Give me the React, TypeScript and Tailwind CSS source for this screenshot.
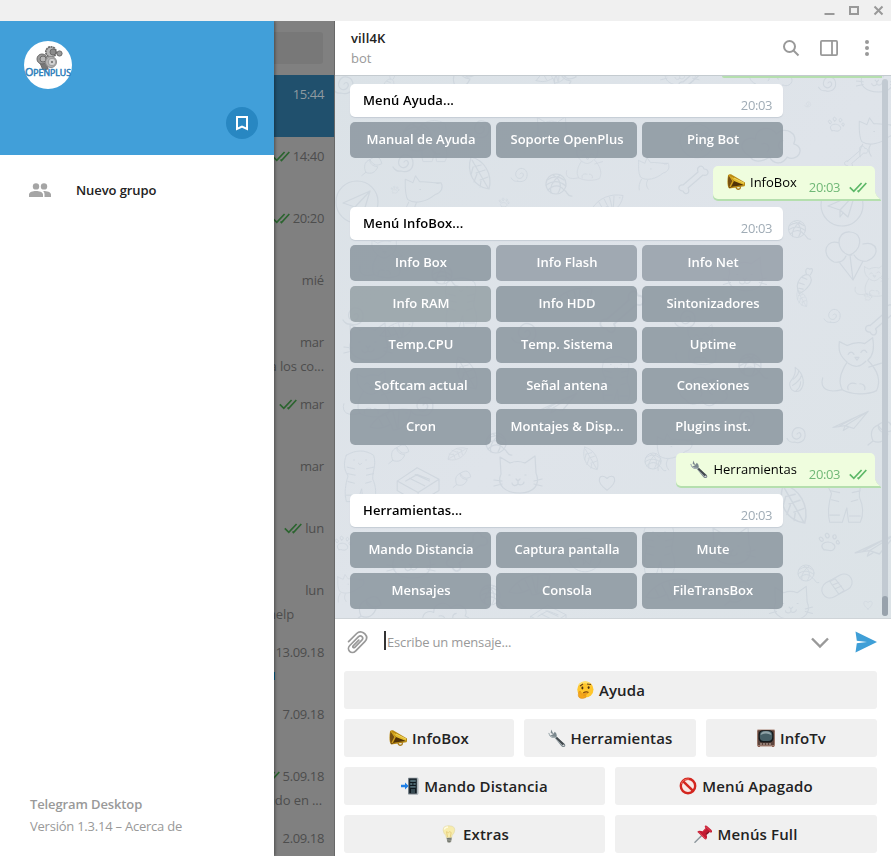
import React from "react";

const PatternMark = ({ kind }: { kind: string }) => {
  switch (kind) {
    case "spiral":
      return <path d="M0 0c3-4 6 1 3 4-4 4-10 0-8-6C-2-10 9-8 9 1 9 8 3 11-3 9M-3 9c-4 1-7-2-8-4" />;
    case "plane":
      return (
        <>
          <circle r="21" />
          <path d="M-14 1 13-11 6 12-2 5-14 1ZM-2 5 13-11M-2 5v7l3-4" />
        </>
      );
    case "dart":
      return <path d="M-18 9 19-8 4 10-5 7-18 9ZM-5 7 19-8M-12 8l22-12M-5 7l-2 5 5-3" />;
    case "fox":
      return <path d="M-22-15c0 8-1 17 3 24 9 6 22 2 32-6 8-2 10-9 7-14-9 1-17-2-25-1l-5-7-3 8-9-4ZM-5-3h1M13-11c3 2 5 1 7 0M-18 12c-3 5-4 10-3 15M-9 13c-3 5-2 9 1 13" />;
    case "leaf":
      return <path d="M-9-17C4-14 13 0 9 15-6 13-14-1-9-17ZM-8-14 8 14M-7-7l8-2M-4-1l9-3M0 6l8-3M-7-7l-2 8M-3 0l-3 8M1 7l-1 6" />;
    case "yarn":
      return (
        <>
          <circle r="10" />
          <path d="M-9-4c7-5 12-4 17 0M-10 1C-3-4 4-3 10 2M-8 6C-2 0 4 1 8 6M-3-9c8 4 9 12 5 18M4-9C-2-4-7 3-5 9M8 6c4 2 3 7 8 6" />
        </>
      );
    case "bone":
      return <path d="m-9 5 15-13c-2-6 5-8 6-3 6 0 5 8-1 6L-4 8c3 5-3 8-5 3-6 0-5-7 0-6Z" />;
    case "balloon":
      return <path d="M0-20c-15-1-14 20-1 23 12-3 16-22 1-23ZM-11-9c-12-5-20 11-5 19 6 1 10-1 12-6M13-8c14-4 19 11 4 17-6 1-10-1-13-6M0 3l3 25M-11 10 3 28M13 9 3 28M-2 3h4" />;
    case "cat":
      return <path d="M-17-23-7-17c5-2 10-2 15 0l10-7 1 17c5 12-3 20-16 20-15 0-24-8-19-19l-1-17ZM-8-5h1M8-5h1M-1-1l2 2 2-2M1 1v3c-3 3-6 1-6-1M1 4c3 2 6 0 6-2M-23 0l8 1M-23 6l8-2M17 1l8-2M17 4l8 2" />;
    case "kitty":
      return <path d="M-17-31-9-27C-3-30 3-31 9-29l8-6c2 11 0 19-5 23 9 9 14 20 9 31-10 5-26 4-35-1-5-9-1-19 5-28-8-7-9-12-8-21ZM-8-18c2-3 4-3 6 0M5-20c2-3 4-3 6 0M-1-15h4l-2 3-2-3ZM-8-9C-1-4 4-5 10-11M-14 18c-15 4-23-1-20-12M-8 18c-2-5 3-8 8-6M9 18c1-4-2-6-5-6M13-5l13-4" />;
    case "tiger":
      return <path d="M-17-31c12-7 23-7 34 0 4 13-2 20-1 30 4 9 5 19 1 28H4L2 11-3 27h-14c-3-11-1-22 2-32-5-8-6-17-2-26ZM-16-16l9 2M-16-8l10 2M17-16 8-14M17-8 8-6M-15 2l8 2M14 2 7 4M-8-25h1M7-25h1M-2-21l2 2 2-2M-17 19H-6M5 20h12" />;
    case "box":
      return <path d="m-24-2 21-14L20-4-2 10-24-2Zm0 0v10L-2 21 20 8V-4M-2 10v11M-15-2-3-9l13 5M-11-5 5 3M-5-9l15 7" />;
    case "heart":
      return <path d="M0 8C-15-3-7-12 0-5 7-12 15-3 0 8Z" />;
    case "paw":
      return <path d="M-5 7c-5-5 0-8 4-8s10 4 5 8c-3 2-6-1-9 0ZM-8-2c-4-3 0-6 2-2 1 2-1 3-2 2ZM-2-5c-4-3 0-7 2-3 1 2-1 3-2 3ZM5-4c-3-3 1-6 2-3 1 2-1 3-2 3ZM9 1c-4-1 0-6 1-2 1 1 0 2-1 2Z" />;
    case "bandage":
      return (
        <>
          <rect x="-18" y="-9" width="36" height="18" rx="9" transform="rotate(-29)" />
          <path d="m-8-5 6-3L8 5 2 9-8-5ZM-5-1l7-3M-2 3l7-3" />
        </>
      );
    case "cloud":
      return <path d="M-22 10c-15-8-3-20 5-15 0-12 15-13 19-5 8-8 21 0 16 9 12 4 3 17-6 12-5 8-13 6-16 0-8 5-15 5-18-1ZM-11-1c6-2 8 4 5 7M8-4c-5 1-5 7-1 8" />;
    case "carrot":
      return <path d="M-6 14C-14 1 0-11 5-6 11 0 2 10-6 14ZM2-7c-3-6 1-9 3-6 3-2 5 0 1 6M-7 2l6 2M-3-4l5 2M-7 8l5 1" />;
    case "flame":
      return <path d="M-7 9c-5-10 7-8 5-23C9-6 9 6 3 12-1 14-6 12-7 9ZM-4-1c4-3 6-6 6-10M-5 6C2 2 4-2 5-5M-1 12c4-3 5-6 5-10" />;
    case "fish":
      return <path d="M-21 7C-12-7 4-13 20-10c-1 9-7 20-18 20L0 4c-9 5-13 5-21 3ZM-12-1l4 7M-5-5l4 8M2-8l4 16M8-9 7 8M15-7h1" />;
    default:
      return <path d="M-9 8c-3-7-2-13 5-16 0 5 3 8 10 9-3 7-8 10-15 7Zm5-16c8-6 13-4 15 5-6 3-10 3-15-5ZM-9 8-14 12" />;
  }
};

const marks: [string, number, number, number?, number?][] = [
  ["spiral", 344, 84], ["sprig", 464, 78], ["fish", 553, 75, .8], ["sprig", 565, 80], ["carrot", 389, 84, .7], ["bone", 692, 77], ["cat", 679, 75, .8], ["cloud", 773, 76, .8], ["spiral", 828, 83, .85], ["cat", 876, 81, .85],
  ["plane", 357, 202], ["fox", 424, 192, .85], ["leaf", 480, 174], ["spiral", 520, 174, .8], ["yarn", 556, 184], ["kitty", 587, 167, .6], ["fish", 608, 203, .75], ["sprig", 373, 166, .8], ["paw", 395, 190, .4], ["paw", 504, 203, .5], ["spiral", 404, 162], ["tiger", 434, 144, .65],
  ["fox", 654, 171, .7], ["bone", 692, 180], ["cloud", 774, 145, 1.1], ["paw", 836, 125, .8], ["fox", 878, 134, .85], ["bone", 855, 157, .8], ["spiral", 808, 104, .3], ["plane", 842, 205], ["yarn", 797, 229, .85], ["balloon", 850, 252],
  ["carrot", 805, 281, .9], ["kitty", 874, 284, .55], ["leaf", 802, 299, .5], ["flame", 797, 380, .9], ["spiral", 833, 315, .8], ["bone", 880, 320, 1.1], ["kitty", 856, 372, .98],
  ["paw", 868, 297, .4], ["dart", 850, 419, .95], ["spiral", 797, 434, .9], ["sprig", 882, 433], ["tiger", 360, 480, .8], ["box", 420, 483, .95], ["cat", 517, 480], ["sprig", 463, 479, .7], ["sprig", 400, 454, .8], ["leaf", 457, 454, .6, 90], ["leaf", 591, 459, .7], ["heart", 607, 483, .9], ["yarn", 496, 443],
  ["fox", 675, 449, .8], ["yarn", 653, 461, .8], ["tiger", 845, 498, .9], ["leaf", 794, 505, 1.2], ["paw", 829, 543], ["dart", 875, 543, 1.1], ["yarn", 806, 573, .8], ["bandage", 837, 586, .9], ["paw", 343, 544, .8], ["fox", 351, 586, .6], ["cat", 790, 608, .9], ["cloud", 449, 617, .9], ["sprig", 370, 608], ["box", 550, 618, .8], ["heart", 868, 605, .5],
  ["spiral", 480, 128], ["yarn", 417, 137, 1.4], ["cat", 551, 136, .8], ["plane", 697, 141, .8], ["kitty", 384, 262, .7], ["yarn", 442, 274], ["spiral", 354, 315], ["tiger", 461, 307, .8], ["bone", 620, 312, 1.5], ["fish", 572, 299], ["cat", 744, 279, .9], ["spiral", 686, 318], ["cat", 367, 347], ["fish", 397, 330, .8],
  ["kitty", 371, 399, .8], ["spiral", 423, 405, 1.1], ["leaf", 467, 374], ["spiral", 525, 332, 1.2], ["tiger", 616, 382, .7], ["yarn", 750, 365, 1.1], ["dart", 558, 401], ["cloud", 706, 391, .9], ["kitty", 700, 349, .7], ["fish", 391, 420], ["spiral", 745, 418], ["bone", 465, 552, 1.4], ["yarn", 490, 595], ["fish", 530, 585], ["plane", 585, 555, .8], ["tiger", 659, 552, .8], ["cat", 730, 551], ["fish", 667, 590], ["sprig", 739, 593], ["cat", 410, 565],
];

const Wallpaper = () => (
  <svg className="absolute inset-0 h-full w-full" viewBox="335 76 556 542" preserveAspectRatio="none" fill="none">
    <defs>
      <linearGradient id="sky" x1="0" y1="0" x2="1" y2="1">
        <stop stopColor="#dbe2e7" />
        <stop offset=".5" stopColor="#dfe4ea" />
        <stop offset="1" stopColor="#dce3e7" />
      </linearGradient>
    </defs>
    <path fill="url(#sky)" d="M335 76h556v542H335z" />
    <g stroke="#cbd3db" strokeWidth="1.2" strokeLinecap="round" strokeLinejoin="round" opacity=".75">
      {marks.map(([kind, x, y, s = 1, r = 0], i) => (
        <g key={i} transform={`translate(${x} ${y}) rotate(${r}) scale(${s})`}>
          <PatternMark kind={kind} />
        </g>
      ))}
    </g>
  </svg>
);

const Emoji = ({ name, className = "" }: { name: string; className?: string }) => {
  const art: Record<string, React.ReactNode> = {
    horn: (
      <>
        <path d="M1 2.2Q2 1 4 1.3L18 9.4q1 2-.6 3.8L2.2 15.5Q-.5 13 1 2.2Z" fill="#b98912" />
        <path d="M3 3 17 10v2.2L6 13.5 3 3Z" fill="#e3bb2c" />
        <path d="m7 8 10 4-14 2 4-6Z" fill="#513207" />
        <path d="M2 1.8 7 8l-3 7H2Q0 8 2 1.8Z" fill="#765013" />
        <path d="m2 2 4 6-3 6" stroke="#d5a41d" strokeWidth="1.3" fill="none" />
        <path d="M9 13.7q.3 3 3 2.5 2-.6 1-3" stroke="#a87917" strokeWidth="1.3" fill="none" />
        <path d="m7 5 10 5" stroke="#f3dc6b" strokeWidth=".9" />
      </>
    ),
    wrench: (
      <>
        <path d="M3.2.5 2.7 4 5 5.1 6.9 2.8Q9.5 5 8.5 8l8 6.7q1.8 2-.2 3.3-1.6.8-3-1L6.8 9.1Q1.4 9.2.4 3.6l2.1 2.8L5.4 5" fill="#7b888e" />
        <path d="M.9 4q.7 4.4 6 4.2l8.3 8.7" stroke="#b0babd" strokeWidth="1.1" fill="none" />
        <path d="m8.4 8.6 7.5 7.4" stroke="#42494d" strokeWidth="2" />
        <circle cx="15.5" cy="16.3" r=".8" fill="#e4e5e5" />
      </>
    ),
    think: (
      <>
        <circle cx="9.4" cy="8.5" r="8.1" fill="#ffc62c" />
        <path d="M3 4Q8-1 14 3" stroke="#ffe16a" strokeWidth="2" fill="none" />
        <path d="m4 5 3-2M11 3l4 .5" stroke="#694116" strokeWidth="1.1" />
        <ellipse cx="6.4" cy="7" rx="1" ry="1.4" fill="#4c3012" />
        <ellipse cx="12.6" cy="6.6" rx="1" ry="1.4" fill="#4c3012" />
        <path d="M7.2 12q3-1.8 5.3-.5" stroke="#79420e" strokeWidth="1.2" fill="none" />
        <path d="M3.1 10.6q1.5-1.2 2.1 1l-.2 1.3 6-1.1q1.2.3.2 1.2l-3.7 1.1 2.2.2q1.2.5-.2 2.4l-3 .9q-4.7-.4-4.2-4.2l.8-2.8Z" fill="#f5a619" stroke="#d88919" strokeWidth=".5" />
      </>
    ),
    tv: (
      <>
        <rect y=".5" width="18" height="17" rx="1" fill="#a88476" />
        <rect x=".8" y="1.2" width="16.4" height="15" rx="1" fill="#5c443d" />
        <rect x="1.6" y="1.2" width="14.8" height="12.4" rx="4.2" fill="#15191b" />
        <rect x="2.8" y="1.9" width="12.4" height="10.2" rx="4" fill="#465f66" />
        <path d="M3.6 6q5.4-3 10.8 0-.4-3.8-5.4-3.8T3.6 6Z" fill="#a9b9bd" opacity=".75" />
        <path d="M3 15h12" stroke="#c4b4a9" strokeWidth="1.2" strokeDasharray="2 1" />
        <path d="M2 17v1m14-1v1" stroke="#8e6154" strokeWidth="2" />
      </>
    ),
    phone: (
      <>
        <path d="M7.8.7h8.5q1 0 1 1v14.8q0 1-1 1H7.8q-.8 0-.8-1V1.7q0-1 .8-1Z" fill="#77828a" />
        <path d="M8.2 1.6h7.6v14.8H8.2z" fill="#101a20" />
        <path d="M9.2 2.8h5.6v2.2H9.2zM9.2 6h2.2v1.9H9.2zm3.2 0h2.3v1.9h-2.3zm-3.2 3h5.5v1.7H9.2z" fill="#4f6a73" />
        <path d="M10 13h4m-4 2h4" stroke="#5d7a83" />
        <path d="M16.4 1v16" stroke="#c1c9ce" strokeWidth=".8" />
        <path d="M0 7.7h4V5.4L7.6 9 4 12.6v-2.3H0Z" fill="#1f7fe6" />
      </>
    ),
    stop: (
      <>
        <circle cx="9" cy="9" r="7.2" fill="#f8e8e5" stroke="#d3261f" strokeWidth="2.4" />
        <path d="m4.2 4.3 9.6 9.4" stroke="#d3261f" strokeWidth="2.5" />
        <path d="M2.2 7Q3.8 1.8 10 2" stroke="#f27a6b" strokeWidth=".8" fill="none" />
      </>
    ),
    bulb: (
      <>
        <path d="M6.5 13Q6.3 10 4 8.2.8 1 8.7.7 17 .9 14 8q-2.5 2.1-2.4 5Z" fill="#f7ecad" stroke="#dfd6a2" strokeWidth=".6" />
        <path d="m7.5 12-1-5.3 2 1 1.2-1 1.5.8-.9 4.5" stroke="#e3c772" strokeWidth=".8" fill="none" />
        <path d="M6.6 12.7h5.2L11.2 17l-2 1-2-1Z" fill="#a6a69b" />
        <path d="m6.8 13.7 4.7-.5m-4.4 2 4.3-.5m-3.8 2 3-.3" stroke="#626963" strokeWidth=".8" />
        <path d="M4.2 4.5Q5 2.2 8 2" stroke="#fffbe1" strokeWidth="1.5" fill="none" />
      </>
    ),
    pin: (
      <>
        <path d="m7.5 10.7-7 7" stroke="#8b969c" strokeWidth="1.4" />
        <path d="M11.1.7q1-.7 2.5.7l3.6 3.4q1.6 1.7.6 2.5-1.1.5-2.4-.4l-3 2.5q1.4 3-.2 4.8-.7.6-1.6-.2L4 7.6q-1.1-1 .1-1.7 2.3-.7 4.5.4L11.5 3Q10.3 1.5 11.1.7Z" fill="#c41c33" />
        <path d="m11.5 1.2 5.3 5.1M8.6 6.5l3.5-3.1m-7.7 3.4 7.2 6.8" stroke="#e85563" strokeWidth=".8" fill="none" />
        <path d="m12 9.3 3-2.4" stroke="#84172a" strokeWidth="1.5" />
      </>
    ),
  };
  return (
    <svg viewBox="0 0 18 18" className={`h-[18px] w-[18px] shrink-0 ${className}`}>
      {art[name]}
    </svg>
  );
};

const Checks = ({ className = "" }: { className?: string }) => (
  <svg viewBox="0 0 18 11" className={`h-[11px] w-[18px] shrink-0 ${className}`} fill="none" stroke="currentColor" strokeWidth="1.7">
    <path d="m.8 5.4 4 4L12.6 1M8.5 8.5l1 1L17.3 1" />
  </svg>
);

const BotCard = ({ title, labels }: { title: string; labels: string[] }) => (
  <div className="w-[433px]">
    <div className="flex h-[33px] items-start justify-between rounded-[5px] bg-white pl-[13px] pr-[11px] shadow-[0_1px_1px_#c5cdd5]">
      <span className="pt-[7px] leading-[18px] font-semibold tracking-[0.12px] text-black">{title}</span>
      <span className="pt-3 leading-[18px] tracking-[-0.4px] text-[#a0acb6]">20:03</span>
    </div>
    <div className="mt-[5px] grid grid-cols-3 gap-[5px]">
      {labels.map((label) => (
        <div
          key={label}
          className={`flex h-9 items-center justify-center rounded-[5px] pb-[2px] pl-px font-semibold whitespace-nowrap text-white ${
            label === "Info Flash" || label === "Info Net" ? "bg-[#99a2ac]/90" : label === "Info RAM" ? "bg-[#98a3a8]/90" : "bg-[#8f9aa3]/90"
          }`}
        >
          {label}
        </div>
      ))}
    </div>
  </div>
);

const Sent = ({ icon, text }: { icon: string; text: string }) => (
  <div className="relative my-2 mr-4 flex h-[33px] self-end rounded-[5px] rounded-br-none bg-[#effdde] pl-[14px] text-black shadow-[0_2px_0_#b5dfae]">
    <Emoji name={icon} className="mt-[7px]" />
    <span className="ml-[5px] pt-[7px] leading-[18px]">{text}</span>
    <span className="ml-3 pt-3 leading-[18px] tracking-[-0.4px] text-[#70b877]">20:03</span>
    <Checks className="mt-4 mr-[8px] ml-[9px] text-[#5db868]" />
    <svg className="absolute -right-[6px] -bottom-[2px] h-[9px] w-[6px]" viewBox="0 0 6 9">
      <path d="M0 0q1 4 6 8v1H0Z" fill="#b5dfae" />
      <path d="M0 0q1 4 5 7H0Z" fill="#effdde" />
    </svg>
  </div>
);

const dialogs: { time: string; read?: boolean; text?: string; pad?: string }[] = [
  { time: "15:44" },
  { time: "14:40", read: true },
  { time: "20:20", read: true },
  { time: "mié" },
  { time: "mar", text: "a los co..." },
  { time: "mar", read: true },
  { time: "mar" },
  { time: "lun", read: true },
  { time: "lun", text: "help", pad: "pr-[40px]" },
  { time: "13.09.18" },
  { time: "7.09.18" },
  { time: "5.09.18", read: true, text: "ado en ...", pad: "pr-3" },
  { time: "2.09.18" },
];

const Key = ({ icon, text, className = "" }: { icon: string; text: string; className?: string }) => (
  <div className={`flex h-[38px] items-center justify-center gap-[5px] rounded-[3px] bg-[#f0f0f0] text-[15px] font-semibold tracking-[0.14px] text-[#222] ${className}`}>
    <Emoji name={icon} />
    <span>{text}</span>
  </div>
);

export default function App() {
  return (
    <div className="flex h-[856px] w-[891px] flex-col overflow-hidden bg-white font-['Open_Sans','Noto_Sans',sans-serif] text-[13px] leading-[18px]">
      <header className="flex h-[21px] shrink-0 items-start justify-end bg-[#f0f0f0] pr-[7px] text-[#999]">
        <svg width="61" height="21" viewBox="0 0 61 21" fill="none" stroke="currentColor" strokeWidth="2">
          <path d="M1.5 14h10M27 7h8v7h-8Z" />
          <path d="m51.500 6.500 8 8m0-8-8 8" />
        </svg>
      </header>
      <main className="flex min-h-0 flex-1 overflow-hidden">
        <aside className="z-10 flex w-[274px] shrink-0 flex-col bg-white shadow-[1px_0_3px_#0006]">
          <section className="flex h-[134px] shrink-0 items-start justify-between bg-[#419fd9] pt-5 pr-4 pl-6">
            <svg width="48" height="48" viewBox="0 0 48 48">
              <circle cx="24" cy="24" r="24" fill="#fff" />
              <g fill="#b5b5b5" stroke="#6a6a6a" strokeWidth="1">
                <path d="m16 22 3 7 5-1-1-6" fill="#777" />
                <circle cx="18" cy="18" r="5" fill="#999" />
                <circle cx="19" cy="18" r="3" />
                <circle cx="27" cy="11" r="5.2" strokeDasharray="2 .6" strokeWidth="1.7" />
                <circle cx="29" cy="11" r="3" fill="#8a8a8a" />
                <circle cx="35.500" cy="12.500" r="2.600" fill="#999" />
                <circle cx="27" cy="21" r="5.500" stroke="#8a8a8a" />
                <circle cx="28" cy="21" r="3.800" fill="#d2d2d2" stroke="#999" />
                <circle cx="28" cy="21" r=".7" />
              </g>
              <text x="1" y="35" textLength="46" lengthAdjust="spacingAndGlyphs" fill="#2f80bb" stroke="#2f80bb" strokeWidth=".5" fontFamily="Open Sans" fontSize="8.500">
                <tspan fontSize="10.500">O</tspan>PENPLUS
              </text>
            </svg>
            <div className="mt-[66px] flex h-8 w-8 items-center justify-center rounded-full bg-[#2887c2]">
              <svg width="14" height="16" viewBox="0 0 14 16" fill="none" stroke="white" strokeWidth="2">
                <path d="M2 2h10v12l-5-2.5L2 14Z" />
              </svg>
            </div>
          </section>
          <nav className="flex h-[70px] items-center pl-[29px]">
            <svg width="22" height="15" viewBox="0 0 22 15" fill="#a5a5a5">
              <circle cx="7" cy="3.4" r="3.2" />
              <circle cx="15" cy="3.4" r="3.2" />
              <path d="M0 14v-2.5C0 9 4 8 7 8s7 1 7 3.5V14ZM15.5 14v-3q0-1.6-1.3-3C18 8 22 9 22 11.5V14Z" />
            </svg>
            <span className="ml-[25px] font-semibold tracking-[-0.08px] text-[#222]">Nuevo grupo</span>
          </nav>
          <footer className="mt-auto pb-[19px] pl-[30px] leading-[22px] text-[#999]">
            <div className="font-semibold tracking-[-0.12px]">Telegram Desktop</div>
            <div className="tracking-[-0.23px]">Versión 1.3.14 – Acerca de</div>
          </footer>
        </aside>

        <section className="flex w-[61px] shrink-0 flex-col overflow-hidden border-r border-[#686868] bg-[#808080]">
          <div className="h-[54px] shrink-0 pt-[11px] pr-[11px]">
            <div className="h-8 rounded-r-[3px] bg-[#787878]" />
          </div>
          {dialogs.map((dialog, i) => (
            <div key={i} className={`h-[62px] shrink-0 whitespace-nowrap ${i === 0 ? "bg-[#20506d] text-[#8f9aa0]" : "text-[#4d4d4d]"}`}>
              <div className="flex items-center justify-end gap-[3px] pt-[10px] pr-[10px]">
                {dialog.read && <Checks className="text-[#2b642f]" />}
                <span className={/\d/.test(dialog.time) ? "tracking-[-0.37px]" : "tracking-[-0.15px]"}>{dialog.time}</span>
              </div>
              {dialog.text && <div className={`mt-[6px] flex justify-end tracking-[-0.1px] ${dialog.pad ?? "pr-[10px]"}`}>{dialog.text}</div>}
              {i === 9 && <div className="mt-[6px] flex h-[18px] items-center"><div className="h-2 w-px bg-[#075e86]" /></div>}
            </div>
          ))}
        </section>

        <section className="flex min-w-0 flex-1 flex-col bg-white">
          <header className="flex h-[55px] shrink-0 items-start justify-between border-b border-[#c4cbd0] pt-[7px] pr-[21px] pl-4">
            <div className="leading-5">
              <div className="font-semibold tracking-[0.15px] text-[#222]">vill4K</div>
              <div className="text-[#999]">bot</div>
            </div>
            <div className="mt-[11px] flex text-[#999]">
              <svg width="18" height="18" viewBox="0 0 18 18" fill="none" stroke="currentColor" strokeWidth="2">
                <circle cx="7.500" cy="7.500" r="5.500" />
                <path d="m11.500 11.500 5 5" />
              </svg>
              <svg className="ml-5" width="18" height="18" viewBox="0 0 18 18" fill="none" stroke="currentColor" strokeWidth="1.8">
                <rect x=".9" y="1.9" width="16.2" height="14.2" rx="1" />
                <path d="M12 2v14" />
              </svg>
              <svg className="ml-[26px]" width="6" height="18" viewBox="0 0 6 18" fill="currentColor">
                <circle cx="3" cy="3" r="2" /><circle cx="3" cy="9" r="2" /><circle cx="3" cy="15" r="2" />
              </svg>
            </div>
          </header>

          <div className="relative h-[542px] shrink-0 overflow-hidden">
            <Wallpaper />
            <div className="absolute top-0 right-[9px] h-[2px] w-[160px] rounded-bl-[4px] bg-[#b5dfae]" />
            <div className="relative flex flex-col pt-2 pl-[15px]">
              <BotCard title="Menú Ayuda..." labels={["Manual de Ayuda", "Soporte OpenPlus", "Ping Bot"]} />
              <Sent icon="horn" text="InfoBox" />
              <BotCard
                title="Menú InfoBox..."
                labels={["Info Box", "Info Flash", "Info Net", "Info RAM", "Info HDD", "Sintonizadores", "Temp.CPU", "Temp. Sistema", "Uptime", "Softcam actual", "Señal antena", "Conexiones", "Cron", "Montajes & Disp...", "Plugins inst."]}
              />
              <Sent icon="wrench" text="Herramientas" />
              <BotCard title="Herramientas..." labels={["Mando Distancia", "Captura pantalla", "Mute", "Mensajes", "Consola", "FileTransBox"]} />
            </div>
            <div className="absolute top-[3px] right-[3px] h-[537px] w-[6px] rounded-full bg-[#c2cad2]">
              <div className="absolute bottom-0 h-5 w-full rounded-full bg-[#98a2ac]" />
            </div>
          </div>

          <div className="flex h-[53px] shrink-0 items-start border-t border-[#cfd4d8] pt-3 pr-[14px] pl-3">
            <svg className="text-[#999]" width="21" height="23" viewBox="0 0 21 23" fill="none" stroke="currentColor" strokeWidth="1.7" strokeLinecap="round">
              <path d="M1.6 10.7 9.7 2.5c3-3 6.7-1.3 8.4.6 2.1 2.4 1.8 5.4-.3 7.5l-9.3 9.5c-2 2-4.5 1.6-5.9.2-1.5-1.5-1.6-4 .2-5.8l8.5-8.6c2.7-2.4 5.900.6 3.500 3.300l-7 7.1c-1.300 1.100-2.600-.3-1.600-1.400l5.600-5.700" />
            </svg>
            <div className="mt-0 ml-4 h-[19px] w-[2px] bg-[#333]" />
            <div className="ml-[1px] flex-1 pt-[2px] tracking-[-0.17px] text-[#999]">Escribe un mensaje...</div>
            <svg className="mt-[6px]" width="18" height="12" viewBox="0 0 18 12" fill="none" stroke="#999" strokeWidth="2.4">
              <path d="m1 1.500 8 8 8-8" />
            </svg>
            <svg className="ml-[26px]" width="22" height="22" viewBox="0 0 22 22">
              <path d="M.5.5 22 11 .5 21.5 1.800 12.200 12 11 1.800 9.800Z" fill="#3f9fd7" />
            </svg>
          </div>

          <div className="flex flex-col gap-[10px] pr-[14px] pl-[9px]">
            <Key icon="think" text="Ayuda" />
            <div className="flex gap-[10px]">
              <Key icon="horn" text="InfoBox" className="w-[170px]" />
              <Key icon="wrench" text="Herramientas" className="w-[172px]" />
              <Key icon="tv" text="InfoTv" className="flex-1" />
            </div>
            <div className="grid grid-cols-[261px_262px] gap-[10px]">
              <Key icon="phone" text="Mando Distancia" />
              <Key icon="stop" text="Menú Apagado" />
              <Key icon="bulb" text="Extras" />
              <Key icon="pin" text="Menús Full" />
            </div>
          </div>
        </section>
      </main>
    </div>
  );
}
